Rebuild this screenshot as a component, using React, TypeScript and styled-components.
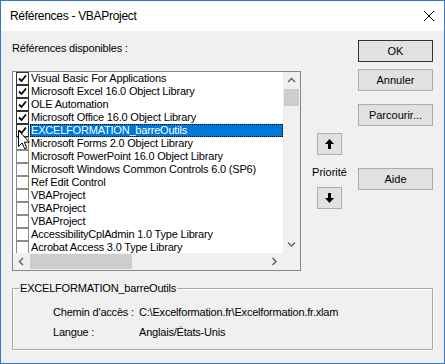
import React from 'react'
import styled, { createGlobalStyle, css } from 'styled-components'

const GlobalStyle = createGlobalStyle`
    html, body {
        margin: 0;
        padding: 0;
        background: #ffffff;
    }

    body {
        font-family: "Liberation Sans", Arial, sans-serif;
        color: #000000;
    }
`

const Window = styled.div`
    width: 445px;
    height: 364px;
    box-sizing: border-box;
    border: 1px solid #2b7bc8;
    display: flex;
    flex-direction: column;
    background: #f0f0f0;
    overflow: hidden;
`

const TitleBar = styled.div`
    height: 30px;
    flex: none;
    background: #ffffff;
    display: flex;
    align-items: center;
    padding: 0 10px 0 9px;
    font-size: 12px;
    letter-spacing: -0.3px;
`

const Title = styled.span`
    flex: 1;
`

const Body = styled.div`
    flex: 1;
    padding: 0 11px;
    display: flex;
    flex-direction: column;
    font-size: 11px;
    letter-spacing: -0.2px;
`

const TopArea = styled.div`
    display: flex;
`

const LeftCol = styled.div`
    width: 289px;
    display: flex;
    flex-direction: column;
`

const Caption = styled.div`
    margin-top: 10px;
    height: 14px;
    line-height: 14px;
`

const ListBox = styled.div`
    position: relative;
    margin-top: 16px;
    height: 200px;
    box-sizing: border-box;
    border: 1px solid #828790;
    background: #ffffff;
    display: grid;
    grid-template-columns: 1fr 17px;
    grid-template-rows: 1fr 17px;
`

const Rows = styled.div`
    overflow: hidden;
`

const Row = styled.div`
    height: 13px;
    display: flex;
    align-items: center;
    white-space: nowrap;
`

const Box = styled.span<{ $checked: boolean }>`
    flex: none;
    width: 11px;
    height: 11px;
    margin-left: 3px;
    border: 1px solid ${p => (p.$checked ? '#333333' : '#8a8a8a')};
    background: #ffffff;
    display: flex;
    align-items: center;
    justify-content: center;
`

const Label = styled.span<{ $selected: boolean }>`
    flex: 1;
    height: 13px;
    line-height: 13px;
    margin-left: 1px;
    padding-left: 1px;
    box-sizing: border-box;
    ${p => p.$selected && css`
        background: #0078d7;
        color: #ffffff;
        outline: 1px dotted #000000;
        outline-offset: -1px;
    `}
`

const ScrollTrack = styled.div<{ $vertical: boolean }>`
    background: #f0f0f0;
    display: flex;
    flex-direction: ${p => (p.$vertical ? 'column' : 'row')};
`

const ScrollArrow = styled.div`
    flex: none;
    width: 17px;
    height: 17px;
    display: flex;
    align-items: center;
    justify-content: center;
`

const Thumb = styled.div<{ $vertical: boolean }>`
    flex: none;
    background: #cdcdcd;
    ${p => (p.$vertical ? css`height: 17px; margin: 0 1px;` : css`width: 102px; margin: 1px 0;`)}
`

const Spacer = styled.div`
    flex: 1;
`

const Corner = styled.div`
    background: #f0f0f0;
`

const Cursor = styled.svg`
    position: absolute;
    left: 5px;
    top: 58px;
`

const PriorityCol = styled.div`
    width: 57px;
    display: flex;
    flex-direction: column;
    align-items: center;
`

const Button = styled.div<{ $top: number; $default?: boolean; $width?: number }>`
    margin-top: ${p => p.$top}px;
    width: ${p => p.$width ?? 75}px;
    height: 22px;
    box-sizing: border-box;
    background: #e1e1e1;
    border: 1px solid ${p => (p.$default ? '#333333' : '#adadad')};
    display: flex;
    align-items: center;
    justify-content: center;
    font-size: 11px;
    letter-spacing: 0;
`

const PriorityText = styled.div`
    margin-top: 10px;
    height: 14px;
    line-height: 14px;
    letter-spacing: 0;
`

const ButtonCol = styled.div`
    width: 75px;
    display: flex;
    flex-direction: column;
`

const Group = styled.fieldset`
    margin: 10px 0 0;
    padding: 7px 0 7px 6px;
    border: 1px solid #a8a8a8;
    box-shadow: inset 1px 1px 0 #ffffff, 1px 1px 0 #ffffff;
`

const Legend = styled.legend`
    padding: 0 1px;
    height: 14px;
    line-height: 14px;
`

const InfoGrid = styled.div`
    margin-left: 34px;
    display: grid;
    grid-template-columns: 86px 1fr;
    grid-auto-rows: 20px;
    align-items: center;
`

const items: [string, boolean][] = [
    ['Visual Basic For Applications', true],
    ['Microsoft Excel 16.0 Object Library', true],
    ['OLE Automation', true],
    ['Microsoft Office 16.0 Object Library', true],
    ['EXCELFORMATION_barreOutils', true],
    ['Microsoft Forms 2.0 Object Library', false],
    ['Microsoft PowerPoint 16.0 Object Library', false],
    ['Microsoft Windows Common Controls 6.0 (SP6)', false],
    ['Ref Edit Control', false],
    ['VBAProject', false],
    ['VBAProject', false],
    ['VBAProject', false],
    ['AccessibilityCplAdmin 1.0 Type Library', false],
    ['Acrobat Access 3.0 Type Library', false],
]

const Chevron = ({ dir }: { dir: 'up' | 'down' | 'left' | 'right' }) => {
    const pts = {
        up: '1,5 4.5,1.5 8,5',
        down: '1,1.5 4.5,5 8,1.5',
        left: '5,1 1.5,4.5 5,8',
        right: '1.5,1 5,4.5 1.5,8',
    }[dir]
    const w = dir === 'up' || dir === 'down' ? 9 : 7
    const h = dir === 'up' || dir === 'down' ? 7 : 9
    return (
        <svg width={w} height={h} viewBox={`0 0 ${w} ${h}`}>
            <polyline points={pts} fill="none" stroke="#606060" strokeWidth="1.4" />
        </svg>
    )
}

const Arrow = ({ down }: { down?: boolean }) => (
    <svg width="9" height="10" viewBox="0 0 9 10" style={down ? { transform: 'rotate(180deg)' } : undefined}>
        <polygon points="4.5,0 9,5 6,5 6,10 3,10 3,5 0,5" fill="#000000" />
    </svg>
)

export default function App() {
    return (
        <>
            <GlobalStyle />
            <Window>
                <TitleBar>
                    <Title>Références - VBAProject</Title>
                    <svg width="10" height="10" viewBox="0 0 10 10">
                        <path d="M0 0 L10 10 M10 0 L0 10" stroke="#000000" strokeWidth="1" />
                    </svg>
                </TitleBar>
                <Body>
                    <TopArea>
                        <LeftCol>
                            <Caption>Références disponibles :</Caption>
                            <ListBox>
                                <Rows>
                                    {items.map(([name, checked], k) => (
                                        <Row key={k}>
                                            <Box $checked={checked}>
                                                {checked && (
                                                    <svg width="9" height="9" viewBox="0 0 9 9">
                                                        <polyline points="1,4.5 3.5,7 8,1.5" fill="none" stroke="#000000" strokeWidth="1.8" />
                                                    </svg>
                                                )}
                                            </Box>
                                            <Label $selected={k === 4}>{name}</Label>
                                        </Row>
                                    ))}
                                </Rows>
                                <ScrollTrack $vertical>
                                    <ScrollArrow><Chevron dir="up" /></ScrollArrow>
                                    <Thumb $vertical />
                                    <Spacer />
                                    <ScrollArrow><Chevron dir="down" /></ScrollArrow>
                                </ScrollTrack>
                                <ScrollTrack $vertical={false}>
                                    <ScrollArrow><Chevron dir="left" /></ScrollArrow>
                                    <Thumb $vertical={false} />
                                    <Spacer />
                                    <ScrollArrow><Chevron dir="right" /></ScrollArrow>
                                </ScrollTrack>
                                <Corner />
                                <Cursor width="12" height="20" viewBox="0 0 12 20">
                                    <path
                                        d="M0.5 0.5 L0.5 16.5 L4.2 13 L6.7 18.8 L8.8 17.9 L6.3 12.2 L11.3 12.2 Z"
                                        fill="#ffffff"
                                        stroke="#000000"
                                        strokeWidth="1"
                                    />
                                </Cursor>
                            </ListBox>
                        </LeftCol>
                        <PriorityCol>
                            <Button $top={102} $width={25}><Arrow /></Button>
                            <PriorityText>Priorité</PriorityText>
                            <Button $top={8} $width={25}><Arrow down /></Button>
                        </PriorityCol>
                        <ButtonCol>
                            <Button $top={9} $default>OK</Button>
                            <Button $top={7}>Annuler</Button>
                            <Button $top={13}>Parcourir...</Button>
                            <Button $top={42}>Aide</Button>
                        </ButtonCol>
                    </TopArea>
                    <Group>
                        <Legend>EXCELFORMATION_barreOutils</Legend>
                        <InfoGrid>
                            <span>Chemin d'accès :</span>
                            <span>C:\Excelformation.fr\Excelformation.fr.xlam</span>
                            <span>Langue :</span>
                            <span>Anglais/États-Unis</span>
                        </InfoGrid>
                    </Group>
                </Body>
            </Window>
        </>
    )
}
